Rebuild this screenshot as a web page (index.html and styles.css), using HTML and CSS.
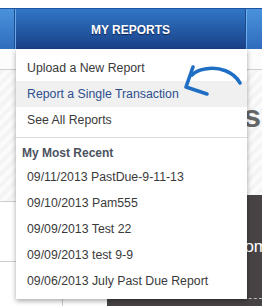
FILE: index.html
```html
<!DOCTYPE html>
<html>
<head>
<meta charset="utf-8">
<link rel="stylesheet" href="styles.css">
</head>
<body>
<div class="top-gap"></div>
<nav class="nav">
  <div class="tab tab-side"></div>
  <div class="tab tab-active">MY REPORTS</div>
  <div class="tab tab-side"></div>
</nav>
<main class="content">
  <div class="col col-left">
    <div class="strip"></div>
    <div class="band band-left"></div>
    <div class="blank"></div>
    <div class="foot-left"></div>
  </div>
  <div class="col col-right">
    <div class="strip"></div>
    <div class="band band-right"><h2 class="big-title">Transactions</h2></div>
    <div class="promo">
      <div class="promo-text">Custom</div>
      <div class="promo-rule"></div>
    </div>
  </div>

  <div class="dropdown">
    <ul class="menu">
      <li class="item">Upload a New Report</li>
      <li class="item item-hover">Report a Single Transaction</li>
      <li class="item">See All Reports</li>
    </ul>
    <div class="recent">
      <div class="recent-title">My Most Recent</div>
      <ul class="menu">
        <li class="item">09/11/2013 PastDue-9-11-13</li>
        <li class="item">09/10/2013 Pam555</li>
        <li class="item">09/09/2013 Test 22</li>
        <li class="item">09/09/2013 test 9-9</li>
        <li class="item">09/06/2013 July Past Due Report</li>
      </ul>
    </div>
  </div>
  <svg class="arrow" width="80" height="50" viewBox="0 0 80 50">
    <path d="M64 28 C58 17 43 11 29 14 C23 15 19 17 16 20" fill="none" stroke="#1e6fc4" stroke-width="3.6" stroke-linecap="round"/>
    <path d="M17 12 L10 32 L31 39" fill="none" stroke="#1e6fc4" stroke-width="3.6" stroke-linecap="round" stroke-linejoin="round"/>
  </svg>
</main>
</body>
</html>
```
FILE: styles.css
```css
* { box-sizing: border-box; }
html, body { margin: 0; padding: 0; background: #fff; }
body { width: 262px; height: 306px; overflow: hidden; font-family: "Liberation Sans", Arial, sans-serif; }

.top-gap { height: 8px; background: #fff; }

.nav {
  display: flex;
  height: 41px;
  border-top: 1px solid #1f54a0;
}
.tab { height: 100%; }
.tab-side {
  width: 15px;
  background: linear-gradient(#4a92dc, #2f6cbc);
  border-right: 1px solid #1d4e94;
}
.tab-side:last-child { border-right: 0; border-left: 1px solid #6fb0ee; flex: 1; }
.tab-active {
  width: 231px;
  border-left: 1px solid #6aa8ea;
  border-right: 1px solid #1b4a8e;
  background: linear-gradient(#2f76c6, #1a4087);
  color: #fff;
  font-weight: bold;
  font-size: 12px;
  display: flex;
  align-items: center;
  justify-content: center;
  text-shadow: 0 1px 1px rgba(0,0,30,0.6);
  padding-top: 1px;
}

.content {
  position: relative;
  display: grid;
  grid-template-columns: 107px 1fr;
  height: 257px;
}
.col { display: flex; flex-direction: column; overflow: hidden; }
.strip { height: 21px; border-bottom: 1px solid #cfcfcf; background: #fcfcfc; flex: none; }
.band {
  background: repeating-linear-gradient(135deg, #f4f4f4 0 4px, #fbfbfb 4px 8px);
  flex: none;
}
.band-left { height: 132px; border-bottom: 1px solid #cfcfcf; }
.blank { height: 60px; border-bottom: 1px solid #cfcfcf; flex: none; }
.foot-left { flex: 1; margin-left: 62px; border-left: 1px solid #cfcfcf; }

.band-right {
  height: 125px;
  display: flex;
  justify-content: flex-end;
  align-items: flex-start;
}
.big-title {
  margin: 28px 1px 0 0;
  font-size: 32px;
  font-weight: bold;
  color: #666;
  white-space: nowrap;
  line-height: 36px;
}
.promo {
  flex: 1;
  background: #474344;
  display: flex;
  flex-direction: column;
}
.promo-text {
  margin-top: 42px;
  text-align: right;
  white-space: nowrap;
  color: #fff;
  font-size: 17px;
  line-height: 20px;
  margin-right: -6px;
}
.promo-rule {
  margin-top: 41px;
  margin-left: 80px;
  border-top: 1px dashed #bdbdbd;
}

.dropdown {
  position: absolute;
  left: 16px;
  top: 0;
  width: 231px;
  height: 250px;
  background: #fff;
  box-shadow: 0 2px 5px rgba(0,0,0,0.35);
  padding-top: 6px;
}
.menu { list-style: none; margin: 0; padding: 0; }
.item {
  height: 26px;
  line-height: 26px;
  padding-left: 11px;
  font-size: 12.3px;
  color: #3a3a3a;
  white-space: nowrap;
}
.item-hover { background: #f0f0f0; color: #2d4f8e; }
.dropdown > .menu { padding-bottom: 4px; border-bottom: 1px solid #dcdcdc; }
.recent { padding-top: 5px; }
.recent-title {
  padding-left: 6px;
  font-size: 12px;
  font-weight: bold;
  color: #4d5260;
  line-height: 20px;
  height: 21px;
}

.arrow { position: absolute; left: 176px; top: 6px; }
```
